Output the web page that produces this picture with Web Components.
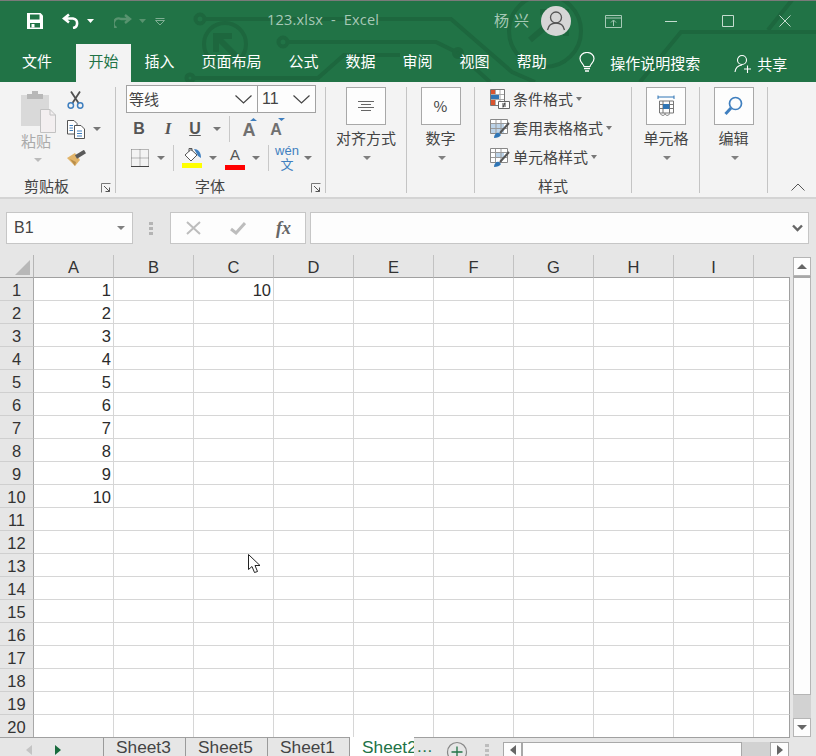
<!DOCTYPE html>
<html lang="zh">
<head>
<meta charset="utf-8">
<title>123.xlsx - Excel</title>
<style>
  html, body { margin: 0; padding: 0; width: 816px; height: 756px; overflow: hidden; background: #e6e6e6; }
  body { font-family: "Noto Sans CJK SC", "Liberation Sans", sans-serif; }
  xl-app { width: 816px; height: 756px; }
</style>
</head>
<body>
<xl-app></xl-app>
<script>
const CJK = `"Noto Sans CJK SC", "Liberation Sans", sans-serif`;
const LATIN = `"Liberation Sans", "Noto Sans CJK SC", sans-serif`;

class XlHeader extends HTMLElement {
    connectedCallback() {
        const tabs = ["插入", "页面布局", "公式", "数据", "审阅", "视图", "帮助"];
        this.attachShadow({ mode: "open" }).innerHTML = `
        <style>
            :host { display: block; position: relative; height: 82px; background: #217346; font: 15px/20px ${CJK}; color: #fff; overflow: hidden; }
            .art { position: absolute; left: 0; top: 0; }
            .strip { position: relative; height: 1px; background: #7a7a7a; }
            .title { position: relative; display: flex; align-items: center; box-sizing: border-box; height: 43px; padding-bottom: 3px; }
            .name { color: #a6c9b6; letter-spacing: .2px; white-space: pre; font-family: "Open Sans", ${LATIN}; font-size: 14.5px; margin-top: -2px; }
            .user { color: #a6c9b6; letter-spacing: 5px; width: 47px; margin-top: -2px; }
            .avatar { width: 30px; height: 30px; border-radius: 50%; background: #d6d6d6; display: flex; }
            .row { position: relative; display: flex; align-items: center; height: 38px; padding-left: 8px; }
            .tab { padding: 0 13.5px; height: 38px; line-height: 34px; white-space: nowrap; }
            .tab.file { padding: 0 14px; margin-right: 10px; }
            .tab.on { background: #f3f3f3; color: #217346; padding: 0 12.5px; }
            svg { display: block; flex: none; }
        </style>
        <svg class="art" width="816" height="82" fill="none" stroke="#1d673e" stroke-width="4">
            <circle cx="200" cy="19" r="4.5"/><path d="M205 19H451L512 72L535 82"/>
            <circle cx="225" cy="44" r="21"/><path d="M216 52V36H232M216 36L236 56" stroke-width="6"/>
            <circle cx="283" cy="42" r="4.5"/><path d="M288 42H436L458 53L490 82"/>
            <circle cx="458" cy="53" r="4"/>
            <circle cx="190" cy="78" r="3.5"/><path d="M194 78H318L344 55H400"/>
            <circle cx="545" cy="31" r="36"/><path d="M530 40L565 10M540 12H566V36" stroke-width="6"/>
            <path d="M640 82L681 32H816M768 30L792 0"/>
        </svg>
        <div class="strip"></div>
        <div class="title">
            <svg style="margin-left:27px" width="16" height="16" viewBox="0 0 16 16"><path fill="#fff" d="M0 0H13.5L16 2.5V16H0Z"/><path fill="#217346" d="M3 1.5H12.5V6.5H3ZM3 10H13V14.5H3Z"/><path fill="#fff" d="M4.5 11H7.5V14.5H4.5Z"/></svg>
            <svg style="margin-left:19px" width="18" height="16" viewBox="0 0 18 16" fill="none" stroke="#fff" stroke-width="2.6"><path d="M7 1.5L2 5.5L7 9.5M2.5 5.5H11A4.8 4.8 0 0 1 11 15"/></svg>
            <svg style="margin-left:7px" width="7" height="4" viewBox="0 0 7 4"><path fill="#fff" d="M0 0H7L3.5 4Z"/></svg>
            <svg style="margin-left:20px" width="18" height="14" viewBox="0 0 18 14" fill="none" stroke="#58936f" stroke-width="2.4"><path d="M11 1L16 5L11 9M15.500 5H7A4.500 4.500 0 0 0 2.500 14"/></svg>
            <svg style="margin-left:7px" width="7" height="4" viewBox="0 0 7 4"><path fill="#58936f" d="M0 0H7L3.500 4Z"/></svg>
            <svg style="margin-left:9px;margin-top:2px" width="10" height="8" viewBox="0 0 10 8" fill="none" stroke="#7fae93"><path d="M.5 .5H9.500M.5 2.500L5 7L9.500 2.500Z"/></svg>
            <span class="name" style="margin-left:102px;width:227px">123.xlsx  -  Excel</span>
            <span class="user">杨兴</span>
            <div class="avatar"><svg width="30" height="30" viewBox="0 0 30 30" fill="none" stroke="#555" stroke-width="1.300"><circle cx="15" cy="11.500" r="5.500"/><path d="M6.500 24C7.500 19 11 17 15 17S22.500 19 23.500 24"/></svg></div>
            <svg style="margin-left:34px" width="17" height="13" viewBox="0 0 17 13" fill="none" stroke="#a6c9b6"><path d="M.5 .5H16.500V12.500H.5ZM.5 3H16.500M8.500 11V5.500M6 7.500L8.500 5L11 7.500"/></svg>
            <svg style="margin-left:43px" width="12" height="1" viewBox="0 0 12 1"><path stroke="#c4dccf" d="M0 .5H12"/></svg>
            <svg style="margin-left:45px" width="12" height="12" viewBox="0 0 12 12" fill="none" stroke="#c4dccf"><path d="M.5 .5H11.500V11.500H.5Z"/></svg>
            <svg style="margin-left:45px" width="12" height="12" viewBox="0 0 12 12" fill="none" stroke="#c4dccf"><path d="M.5 .5L11.500 11.500M11.500 .5L.5 11.500"/></svg>
        </div>
        <div class="row">
            <span class="tab file">文件</span>
            <span class="tab on">开始</span>
            ${tabs.map(t => `<span class="tab">${t}</span>`).join("")}
            <svg style="margin-left:19px;margin-top:-2px" width="16" height="21" viewBox="0 0 16 21" fill="none" stroke="#fff" stroke-width="1.200"><path d="M5 14.500C4.500 11.500 1 10.500 1 6.500A7 6 0 0 1 15 6.500C15 10.500 11.500 11.500 11 14.500Z"/><path d="M5 16.500H11M6 19H10" stroke-width="1.600"/></svg>
            <span style="margin-left:15px;margin-top:-1px">操作说明搜索</span>
            <svg style="margin-left:34px;margin-top:1px" width="18" height="20" viewBox="0 0 18 20" fill="none" stroke="#fff" stroke-width="1.100"><circle cx="8" cy="6" r="4.500"/><path d="M1 18C1.500 13.500 4 11.500 8 11M10 15H17M13.500 11.500V19" /></svg>
            <span style="margin-left:5px;margin-top:1px">共享</span>
        </div>`;
    }
}

class XlGroup extends HTMLElement {
    connectedCallback() {
        const label = this.getAttribute("label");
        const launcher = this.hasAttribute("launcher");
        const pad = this.getAttribute("pad");
        this.attachShadow({ mode: "open" }).innerHTML = `
        <style>
            :host { display: flex; flex-direction: column; flex: none; box-sizing: border-box; height: 106px; border-right: 1px solid #c4c4c4; }
            .body { flex: 1; min-height: 0; }
            .label { display: flex; align-items: center; justify-content: ${pad ? "flex-start" : "center"}; height: 16px; margin-bottom: -1px; line-height: 16px; color: #444; padding-left: ${pad || 0}px; }
            svg { display: block; margin-left: auto; margin-right: 4px; margin-top: 4px; }
        </style>
        <div class="body"><slot></slot></div>
        <div class="label"><span>${label || "&nbsp;"}</span>${launcher ? `<svg width="10" height="10" viewBox="0 0 10 10" fill="none" stroke="#777"><path d="M.5 9.500V.5H9.500"/><path d="M3 3L8.500 8.500M4.500 8.500H8.500V4.500" stroke="#555"/></svg>` : ""}</div>`;
    }
}

class XlBig extends HTMLElement {
    connectedCallback() {
        const label = this.getAttribute("label");
        this.attachShadow({ mode: "open" }).innerHTML = `
        <style>
            :host { display: flex; flex-direction: column; align-items: center; }
            .box { box-sizing: border-box; width: 40px; height: 38px; background: #fdfdfd; border: 1px solid #a8a8a8; display: flex; align-items: center; justify-content: center; }
            .text { margin-top: 3px; height: 20px; line-height: 20px; color: #444; white-space: nowrap; }
            .caret { margin: 8px 0 0 3px; width: 0; height: 0; border: 4px solid transparent; border-top: 4px solid #808080; border-bottom: 0; }
        </style>
        <div class="box"><slot></slot></div>
        <div class="text">${label}</div>
        <div class="caret"></div>`;
    }
}

class XlRibbon extends HTMLElement {
    connectedCallback() {
        this.attachShadow({ mode: "open" }).innerHTML = `
        <style>
            :host { display: flex; box-sizing: border-box; height: 117px; padding: 5px 0 4px; background: #f3f3f3; border-bottom: 2px solid #d4d4d4; font: 15px/20px ${CJK}; color: #444; }
            svg { display: block; flex: none; }
            .caret { flex: none; width: 0; height: 0; border: 4px solid transparent; border-top: 4px solid #777; border-bottom: 0; }
            .caret.s { border-width: 3px; border-top: 4px solid #777; border-bottom: 0; }
            .clip { display: flex; padding-left: 21px; }
            .paste { width: 36px; display: flex; flex-direction: column; align-items: center; color: #aaa; }
            .paste .caret { margin-top: 10px; border-top-color: #bbb; }
            .tools { margin: -1.500px 0 0 10px; }
            .tools > div { display: flex; align-items: center; height: 29px; }
            .sel { display: flex; margin: -2px 0 0 10px; height: 28px; }
            .sel > div { box-sizing: border-box; height: 28px; background: #fdfdfd; border: 1.500px solid #a2a2a2; display: flex; align-items: center; justify-content: space-between; padding: 0 5px 0 2px; }
            .fr { display: flex; align-items: center; height: 29px; padding-left: 15px; color: #555; }
            .sep { flex: none; width: 1px; height: 26px; background: #c8c8c8; }
            .ltr { font-family: ${LATIN}; }
            .b { width: 16px; text-align: center; font-weight: bold; font-size: 16px; }
            .fa { position: relative; width: 20px; text-align: center; font: bold 18px/20px ${LATIN}; color: #707070; padding-top: 2px; }
            .fa svg { position: absolute; top: 0; }
            .center { display: flex; justify-content: center; }
            .st { padding-left: 15px; margin-top: -2.500px; }
            .st > div { display: flex; align-items: center; height: 29px; white-space: nowrap; }
            .st span { margin: 0 3px 0 3px; }
            .more { flex: 1; display: flex; justify-content: flex-end; align-items: flex-end; padding: 0 11px 2px 0; }
        </style>
        <xl-group style="width:116px" label="剪贴板" launcher pad="24">
            <div class="clip">
                <div class="paste">
                    <svg style="margin-top:4px" width="36" height="42" viewBox="0 0 36 42"><path fill="#d9d9d9" d="M0 4H28V35H0Z"/><path fill="#b8b8b8" d="M6 3H11V0H17V3H22V8H6Z"/><path fill="#f3eff0" stroke="#c2c2c2" d="M19.500 18.500H29L34.500 24V41.500H19.500Z"/><path fill="none" stroke="#c2c2c2" d="M29 18.500V24H34.500"/></svg>
                    <span style="line-height:15px;height:15px;margin-right:6px">粘贴</span>
                    <div class="caret" style="margin-right:2px"></div>
                </div>
                <div class="tools">
                    <div><svg width="17" height="18" viewBox="0 0 17 18" fill="none"><path stroke="#505050" stroke-width="1.800" d="M5.500 12L13 .5M11.500 12L4 .5"/><circle cx="3.800" cy="14.500" r="2.700" stroke="#3f7fbf" stroke-width="1.500"/><circle cx="13.200" cy="14.500" r="2.700" stroke="#3f7fbf" stroke-width="1.500"/></svg></div>
                    <div><svg width="18" height="19" viewBox="0 0 18 19" fill="#fff" stroke="#555"><path d="M.5 .5H7L10 3.500V14H.5Z"/><path d="M7.500 5.500H14L17.500 9V18.500H7.500Z"/><path stroke="#3f7fbf" d="M2.500 5.500H6M2.500 8H6M2.500 10.500H6M10 11H15M10 13.500H15M10 16H15"/></svg><div class="caret" style="margin-left:8px"></div></div>
                    <div><svg width="19" height="17" viewBox="0 0 19 17"><path fill="#e2b469" d="M0 8L8 3L13 10L8 16Z"/><path fill="#b98e4a" d="M3 9L9 12L8 16Z"/><path stroke="#5a5a5a" stroke-width="4" d="M9 7L18 1.500"/></svg></div>
                </div>
            </div>
        </xl-group>
        <xl-group style="width:210px" label="字体" launcher pad="79">
            <div class="sel">
                <div style="width:132px"><span>等线</span><svg width="17" height="9" viewBox="0 0 17 9" fill="none" stroke="#444" stroke-width="1.200"><path d="M.5 .5L8.500 8L16.500 .5"/></svg></div>
                <div style="width:59px;margin-left:-1px"><span class="ltr" style="font-size:16px;padding-left:2px">11</span><svg width="17" height="9" viewBox="0 0 17 9" fill="none" stroke="#444" stroke-width="1.200"><path d="M.5 .5L8.500 8L16.500 .5"/></svg></div>
            </div>
            <div class="fr ltr" style="margin-top:1px">
                <span class="b">B</span>
                <span class="b" style="margin-left:13px;font-family:'Liberation Serif',serif;font-style:italic;font-size:17px">I</span>
                <span class="b" style="margin-left:11px;text-decoration:underline">U</span>
                <div class="caret" style="margin-left:10px"></div>
                <div class="sep" style="margin-left:8px"></div>
                <span class="fa" style="margin-left:9px">A<svg style="left:11px" width="7" height="3" viewBox="0 0 7 3"><path fill="#3f7fbf" d="M3.500 0L7 3H0Z"/></svg></span>
                <span class="fa" style="margin-left:7px;font-size:16px">A<svg style="left:12px" width="7" height="3" viewBox="0 0 7 3"><path fill="#3f7fbf" d="M0 0H7L3.500 3Z"/></svg></span>
            </div>
            <div class="fr ltr">
                <svg width="18" height="18" viewBox="0 0 18 18" fill="none" stroke="#777" stroke-dasharray="1 1"><path d="M.5 .5H17.500V17M.5 .5V17M9 .5V17M.5 9H17.500"/><path d="M0 17.500H18" stroke="#444" stroke-dasharray="none"/></svg>
                <div class="caret" style="margin-left:8px"></div>
                <div class="sep" style="margin-left:8px"></div>
                <span style="margin-left:8px;width:20px;display:flex;flex-direction:column"><svg width="20" height="15" viewBox="0 0 20 15"><path fill="#fff" stroke="#555" d="M3 7L9 1.500L15 7L9 13Z"/><path fill="none" stroke="#555" d="M7 3.500V.5H10V3"/><path fill="#3f7fbf" d="M12 1C16 1 19 4 19 10L16 8Z"/></svg><i style="display:block;height:5px;background:#ffff00"></i></span>
                <div class="caret" style="margin-left:7px"></div>
                <span style="margin-left:8px;width:20px;display:flex;flex-direction:column;align-items:center;font:bold 21px/16px ${LATIN};color:#444">A<i style="display:block;width:20px;height:5px;background:#ff0000"></i></span>
                <div class="caret" style="margin-left:7px"></div>
                <div class="sep" style="margin-left:8px"></div>
                <span style="margin-left:9px;width:18px;display:flex;flex-direction:column;align-items:center;color:#3f7fbf;font-size:13px;line-height:14px"><span style="font:9.500px/10px ${LATIN};color:#444">wén</span><span style="font-family:${CJK}">文</span></span>
                <div class="caret" style="margin-left:8px"></div>
            </div>
        </xl-group>
        <xl-group style="width:81px">
            <div class="center"><xl-big label="对齐方式"><svg width="16" height="11" viewBox="0 0 16 11" fill="none" stroke="#666"><path d="M0 .5H16M3 3.500H13M0 6.500H16M3 9.500H13"/></svg></xl-big></div>
        </xl-group>
        <xl-group style="width:68px">
            <div class="center"><xl-big label="数字"><span style="font:20px/22px ${LATIN};color:#555">%</span></xl-big></div>
        </xl-group>
        <xl-group style="width:157px" label="样式">
            <div class="st">
                <div><svg width="20" height="20" viewBox="0 0 20 20"><path fill="#fff" stroke="#777" d="M.5 .5H14.500V16.500H.5Z"/><path stroke="#aaa" d="M5.500 1V16M10 1V16M1 5.500H14M1 10.500H14"/><path fill="#d9542f" d="M1 1H5V5H1ZM1 11H5V16H1Z"/><path fill="#2f75b5" d="M1 6H9V10H1Z"/><path fill="#fff" stroke="#666" d="M8.500 12.500H19.500V19.500H8.500Z"/><path stroke="#444" d="M12 15H16M12 17H16M13 18.500L15 13.500"/></svg><span>条件格式</span><div class="caret s"></div></div>
                <div><svg width="20" height="20" viewBox="0 0 20 20"><path fill="#fff" stroke="#888" d="M.5 1.500H17.500V15.500H.5Z"/><path fill="#bcd3e8" d="M1 5H14V15H1Z"/><path stroke="#999" d="M6 2V15M11 2V15M1 5.500H17M1 10.500H17"/><path fill="#2f75b5" d="M4 20C4 16 7 14 9 15L11 17C10 19 7 20 4 20Z"/><path stroke="#555" stroke-width="2" d="M10 15L19 5"/></svg><span>套用表格格式</span><div class="caret s"></div></div>
                <div><svg width="20" height="20" viewBox="0 0 20 20"><path fill="#fff" stroke="#888" d="M.5 1.500H17.500V15.500H.5Z"/><path fill="#bcd3e8" d="M5 6H14V11H5Z"/><path stroke="#999" d="M5.500 2V15M11 2V15M1 5.500H17M1 10.500H17"/><path fill="#2f75b5" d="M4 20C4 16 7 14 9 15L11 17C10 19 7 20 4 20Z"/><path stroke="#555" stroke-width="2" d="M10 15L19 5"/></svg><span>单元格样式</span><div class="caret s"></div></div>
            </div>
        </xl-group>
        <xl-group style="width:68px">
            <div class="center" style="padding-left:1px"><xl-big label="单元格"><svg width="18" height="22" viewBox="0 0 18 22" fill="none" stroke="#777"><path stroke="#2f75b5" d="M1 .5V4M17 .5V4M1 2H17"/><path d="M2.500 6H16.500V18H2.500ZM2.500 9.500H16.500M2.500 13.500H16.500M6 6V18M12.500 6V18M3.500 18.500C4 21 8 21 8 18.500C8.500 21 12 21 12.500 18.500"/><path fill="#2f75b5" stroke="none" d="M6 9H12.500V14H6Z"/></svg></xl-big></div>
        </xl-group>
        <xl-group style="width:68px">
            <div class="center"><xl-big label="编辑"><svg width="19" height="20" viewBox="0 0 19 20" fill="none" stroke="#3f7fbf"><circle cx="11.500" cy="7.500" r="6" stroke-width="1.700"/><path d="M7 12L1.500 18" stroke-width="3"/></svg></xl-big></div>
        </xl-group>
        <div class="more"><svg width="14" height="8" viewBox="0 0 14 8" fill="none" stroke="#555"><path d="M.5 7.500L7 1L13.500 7.500"/></svg></div>`;
    }
}

class XlFormula extends HTMLElement {
    connectedCallback() {
        this.attachShadow({ mode: "open" }).innerHTML = `
        <style>
            :host { display: flex; align-items: flex-start; box-sizing: border-box; height: 56px; padding-top: 13px; background: #e6e6e6; font: 16px/20px ${LATIN}; color: #444; }
            .box { box-sizing: border-box; height: 32px; background: #fdfdfd; border: 1px solid #c6c6c6; display: flex; align-items: center; flex: none; }
            .caret { width: 0; height: 0; border: 4px solid transparent; border-top: 4px solid #808080; border-bottom: 0; }
            svg { display: block; flex: none; }
            .fx { font: italic bold 18px/20px "Liberation Serif", serif; color: #666; margin-left: 30px; }
        </style>
        <div class="box" style="width:127px;margin-left:6px;padding:0 7px"><span style="flex:1">B1</span><div class="caret"></div></div>
        <svg style="margin:10px 16px 0 16px" width="4" height="13" viewBox="0 0 4 13"><path fill="#b4b4b4" d="M0 0H4V3H0ZM0 5H4V8H0ZM0 10H4V13H0Z"/></svg>
        <div class="box" style="width:136px;margin-left:1px">
            <svg style="margin-left:15px" width="15" height="14" viewBox="0 0 15 14" fill="none" stroke="#bdbdbd" stroke-width="2"><path d="M1 1L14 13M14 1L1 13"/></svg>
            <svg style="margin-left:29px" width="16" height="14" viewBox="0 0 16 14" fill="none" stroke="#bdbdbd" stroke-width="3"><path d="M1 8L6 12L15 2"/></svg>
            <span class="fx">fx</span>
        </div>
        <div class="box" style="width:499px;margin-left:4px;justify-content:flex-end;padding-right:5px"><svg width="11" height="8" viewBox="0 0 11 8" fill="none" stroke="#666" stroke-width="2.400"><path d="M1 1.500L5.500 6L10 1.500"/></svg></div>`;
    }
}

class XlSheet extends HTMLElement {
    connectedCallback() {
        const cols = ["A", "B", "C", "D", "E", "F", "G", "H", "I", ""];
        let head = `<div class="corner"><svg width="15" height="15" viewBox="0 0 15 15"><path fill="#b8b8b8" d="M15 0V15H0Z"/></svg></div>`;
        head += cols.map(c => `<div class="ch">${c}</div>`).join("");
        let rows = "";
        for (let r = 1; r <= 20; r++) {
            rows += `<div class="rh">${r}</div>`;
            for (let c = 0; c < cols.length; c++) {
                let v = "";
                if (c == 0 && r <= 10) v = r;
                if (c == 2 && r == 1) v = 10;
                rows += `<div class="td">${v}</div>`;
            }
        }
        this.attachShadow({ mode: "open" }).innerHTML = `
        <style>
            :host { display: block; position: relative; height: 482px; overflow: hidden; background: #e6e6e6; font: 16.5px/22px ${LATIN}; color: #2b2b2b; }
            .grid { display: grid; width: 790px; grid-template-columns: 34px repeat(9, 80px) 36px; grid-auto-rows: 23px; }
            .corner { box-sizing: border-box; border-right: 1px solid #b5b5b5; border-bottom: 1px solid #a0a0a0; padding: 5px 0 0 15px; }
            .ch { box-sizing: border-box; border-right: 1px solid #c2c2c2; border-bottom: 1px solid #a0a0a0; text-align: center; color: #333; padding-top: 1px; }
            .ch:nth-child(11) { border-right: 0; }
            .rh { box-sizing: border-box; border-right: 1px solid #a8a8a8; border-bottom: 1px solid #cfcfcf; text-align: center; color: #333; padding-top: 1px; }
            .td { box-sizing: border-box; background: #fff; border-right: 1px solid #d6d6d6; border-bottom: 1px solid #d6d6d6; text-align: right; padding: 1px 2px 0 0; }
            .td:nth-child(11n) { border-right: 1px solid #a0a0a0; }
            svg.cursor { position: absolute; left: 248px; top: 299px; }
            svg { display: block; }
        </style>
        <div class="grid">${head}${rows}</div>
        <svg class="cursor" width="14" height="20" viewBox="0 0 14 20"><path fill="#fff" stroke="#222" d="M.5 .5V15.500L4 12.500L6.500 18.500L9.500 17.500L7 11.500H12Z"/></svg>`;
    }
}

class XlVscroll extends HTMLElement {
    connectedCallback() {
        this.attachShadow({ mode: "open" }).innerHTML = `
        <style>
            :host { display: flex; flex-direction: column; box-sizing: border-box; width: 26px; height: 482px; padding: 2px 5px 0 3px; background: #e6e6e6; }
            .btn { flex: none; box-sizing: border-box; height: 19px; background: #fdfdfd; border: 1px solid #b5b5b5; display: flex; align-items: center; justify-content: center; }
            .thumb { flex: none; box-sizing: border-box; height: 419px; background: #fdfdfd; border: 1px solid #b5b5b5; border-top-width: 2px; border-top-color: #a8a8a8; }
            .track { flex: 1; background: #d2d2d2; }
            .up, .dn { width: 0; height: 0; border: 5px solid transparent; }
            .up { border-top: 0; border-bottom: 5px solid #666; }
            .dn { border-bottom: 0; border-top: 5px solid #666; }
        </style>
        <div class="btn"><div class="up"></div></div>
        <div class="thumb"></div>
        <div class="track"></div>
        <div class="btn"><div class="dn"></div></div>`;
    }
}

class XlTabs extends HTMLElement {
    connectedCallback() {
        const sheets = ["Sheet3", "Sheet5", "Sheet1"];
        this.attachShadow({ mode: "open" }).innerHTML = `
        <style>
            :host { display: flex; box-sizing: border-box; height: 19px; background: #e6e6e6; font: 17.300px/19px ${LATIN}; color: #444; overflow: visible; }
            svg { display: block; flex: none; }
            .nav { box-sizing: border-box; width: 104px; height: 19px; border-top: 1px solid #a0a0a0; border-right: 1px solid #9a9a9a; display: flex; align-items: center; padding: 6px 0 0 26px; }
            .tab { box-sizing: border-box; width: 82px; height: 19px; border-top: 1px solid #a0a0a0; border-right: 1px solid #9a9a9a; padding-left: 12px; }
            .on { box-sizing: border-box; width: 65px; height: 19px; background: #fff; color: #217346; padding: 1px 0 0 12px; overflow: hidden; white-space: nowrap; }
            .rest { flex: 1; display: flex; align-items: flex-start; height: 19px; border-top: 1px solid #a0a0a0; margin-right: 26px; box-sizing: border-box; }
            .dots { color: #217346; width: 32px; padding: 2px 0 0 3px; font-size: 17px; line-height: 14px; box-sizing: border-box; letter-spacing: .5px; }
            .sb { box-sizing: border-box; height: 14px; margin-top: 4px; border: 1px solid #a8a8a8; border-bottom: 0; background: #fdfdfd; display: flex; align-items: center; justify-content: center; }
        </style>
        <div class="nav">
            <svg width="6" height="10" viewBox="0 0 6 10"><path fill="#c4c4c4" d="M6 0V10L0 5Z"/></svg>
            <svg style="margin-left:23px" width="6" height="10" viewBox="0 0 6 10"><path fill="#196b3d" d="M0 0V10L6 5Z"/></svg>
        </div>
        ${sheets.map(s => `<div class="tab">${s}</div>`).join("")}
        <div class="on" style="border-left:1px solid #9a9a9a;margin-left:-1px">Sheet2</div>
        <div class="rest">
            <div class="dots">...</div>
            <svg style="margin-top:3px" width="22" height="22" viewBox="0 0 22 22" fill="none" stroke="#888"><circle cx="11" cy="11" r="9.500" stroke-width="1.200"/><path stroke="#217346" stroke-width="1.300" d="M5.500 11H16.500M11 5.500V16.500"/></svg>
            <svg style="margin:6px 0 0 17px" width="4" height="13" viewBox="0 0 4 13"><path fill="#bdbdbd" d="M0 0H4V3H0ZM0 5H4V8H0ZM0 10H4V13H0Z"/></svg>
            <div class="sb" style="width:19px;margin-left:14px"><svg width="6" height="10" viewBox="0 0 6 10"><path fill="#666" d="M6 0V10L0 5Z"/></svg></div>
            <div class="sb" style="width:220px"></div>
            <div style="width:28px;height:14px;margin-top:4px;background:#d2d2d2"></div>
            <div class="sb" style="width:19px"><svg width="6" height="10" viewBox="0 0 6 10"><path fill="#666" d="M0 0V10L6 5Z"/></svg></div>
        </div>`;
    }
}

class XlApp extends HTMLElement {
    connectedCallback() {
        this.attachShadow({ mode: "open" }).innerHTML = `
        <style>
            :host { display: block; overflow: hidden; background: #e6e6e6; }
            .main { display: flex; }
            xl-sheet { width: 790px; flex: none; }
        </style>
        <xl-header></xl-header>
        <xl-ribbon></xl-ribbon>
        <xl-formula></xl-formula>
        <div class="main"><xl-sheet></xl-sheet><xl-vscroll></xl-vscroll></div>
        <xl-tabs></xl-tabs>`;
    }
}

customElements.define("xl-header", XlHeader);
customElements.define("xl-group", XlGroup);
customElements.define("xl-big", XlBig);
customElements.define("xl-ribbon", XlRibbon);
customElements.define("xl-formula", XlFormula);
customElements.define("xl-sheet", XlSheet);
customElements.define("xl-vscroll", XlVscroll);
customElements.define("xl-tabs", XlTabs);
customElements.define("xl-app", XlApp);
</script>
</body>
</html>
